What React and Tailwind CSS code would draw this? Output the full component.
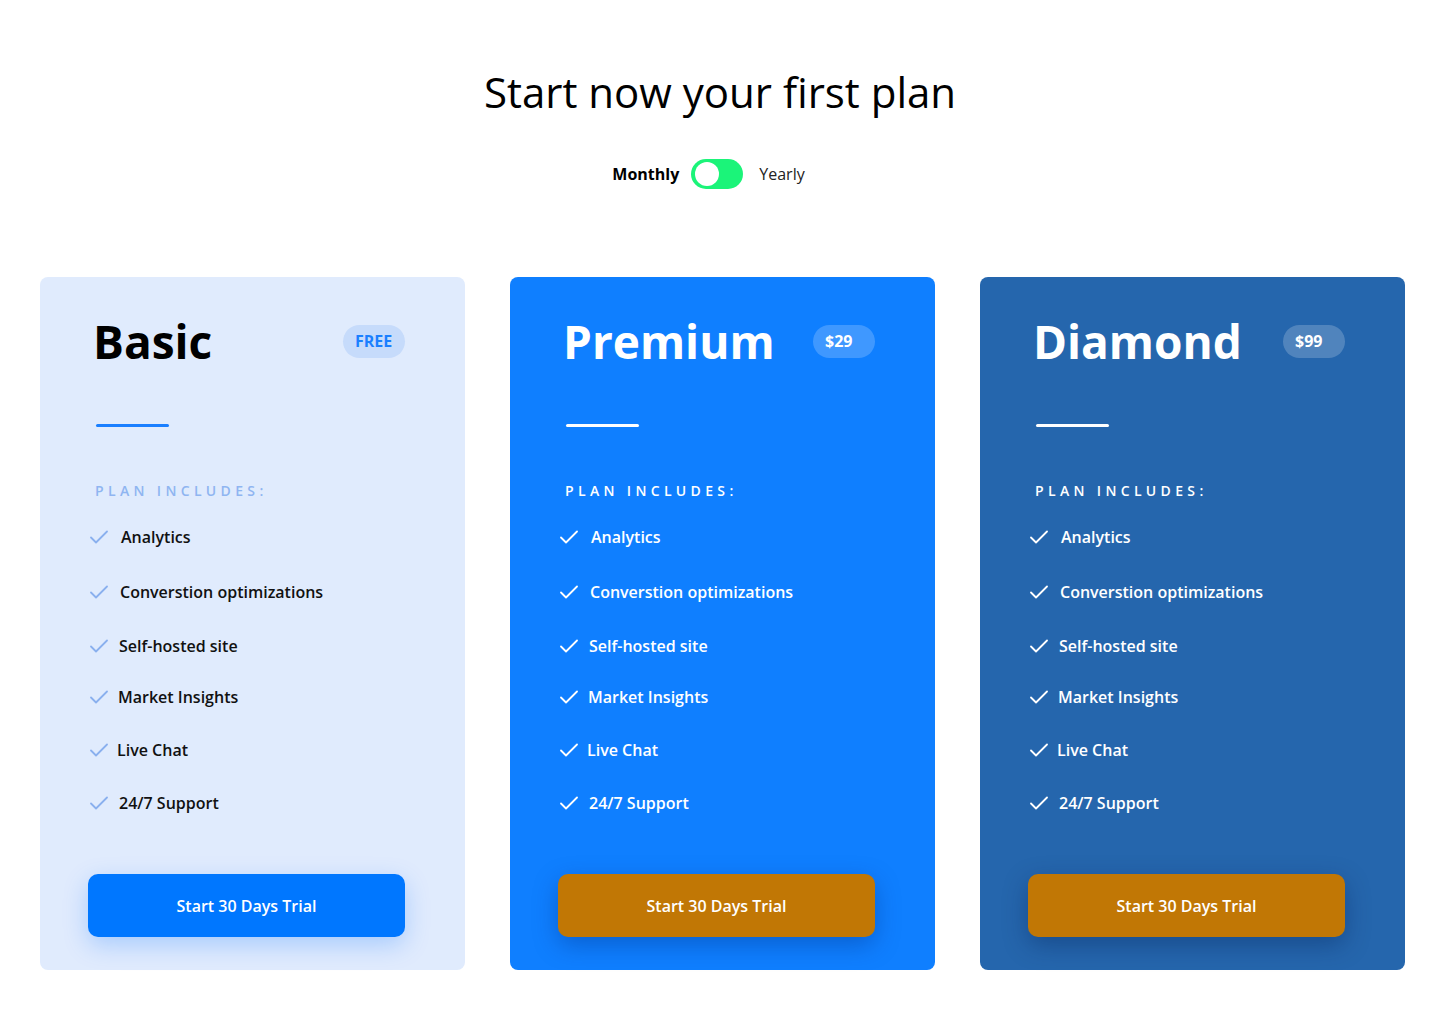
const plans = [
  {
    name: 'Basic',
    badge: 'FREE',
    card: 'bg-[#e0ebfd]',
    title: 'text-black',
    badgeCls: 'bg-[#c6dbfb] text-[#1a7fff]',
    rule: 'bg-[#1a7fff]',
    label: 'text-[#8fb5f1]',
    check: '#8ab0ee',
    text: 'text-[#111]',
    button: 'bg-[#0077ff] shadow-[0_8px_24px_rgba(0,110,255,0.25)]',
  },
  {
    name: 'Premium',
    badge: '$29',
    card: 'bg-[#0f7fff]',
    title: 'text-white',
    badgeCls: 'bg-white/20 text-white',
    rule: 'bg-white',
    label: 'text-white',
    check: '#ffffff',
    text: 'text-white',
    button: 'bg-[#c17705] shadow-[0_8px_24px_rgba(0,40,120,0.35)]',
  },
  {
    name: 'Diamond',
    badge: '$99',
    card: 'bg-[#2566ad]',
    title: 'text-white',
    badgeCls: 'bg-white/20 text-white',
    rule: 'bg-white',
    label: 'text-white',
    check: '#ffffff',
    text: 'text-white',
    button: 'bg-[#c17705] shadow-[0_8px_24px_rgba(0,30,80,0.35)]',
  },
];

// spacing in the design is a little uneven, kept as is
const features = [
  { label: 'Analytics', cls: 'gap-[13px]' },
  { label: 'Converstion optimizations', cls: 'mt-[33px] gap-[12px]' },
  { label: 'Self-hosted site', cls: 'mt-[32px] gap-[11px]' },
  { label: 'Market Insights', cls: 'mt-[29px] gap-[10px]' },
  { label: 'Live Chat', cls: 'mt-[31px] gap-[9px]' },
  { label: '24/7 Support', cls: 'mt-[31px] gap-[11px]' },
];

function Check({ color }) {
  return (
    <svg width="18" height="14" viewBox="0 0 18 14" fill="none" className="shrink-0">
      <path d="M1 7.5 L6 12.5 L17 1.5" stroke={color} strokeWidth="1.8" strokeLinecap="round" strokeLinejoin="round" />
    </svg>
  );
}

function PlanCard({ plan }) {
  return (
    <div className={`flex h-[693px] flex-col rounded-lg pt-[39px] pb-[33px] ${plan.card}`}>
      <div className="flex items-center justify-between pr-[60px] pl-[53px]">
        <h2 className={`text-[46px] leading-[50px] font-bold ${plan.title}`}>{plan.name}</h2>
        <span
          className={`flex h-[33px] w-[62px] items-center rounded-full pl-[12px] text-[16px] font-bold ${plan.badgeCls}`}
        >
          {plan.badge}
        </span>
      </div>
      <div className={`mt-[58px] ml-[56px] h-[3px] w-[73px] rounded-full ${plan.rule}`} />
      <p className={`mt-[54px] ml-[55px] text-[14px] leading-5 font-semibold tracking-[0.31em] ${plan.label}`}>
        PLAN INCLUDES:
      </p>
      <ul className="mt-[25px] pl-[50px]">
        {features.map((f) => (
          <li key={f.label} className={`flex h-[22px] items-center ${f.cls}`}>
            <Check color={plan.check} />
            <span className={`text-[16px] font-semibold ${plan.text}`}>{f.label}</span>
          </li>
        ))}
      </ul>
      <div className="mt-auto pr-[60px] pl-[48px]">
        <button
          className={`h-[63px] w-full rounded-[10px] text-[16px] font-semibold text-white ${plan.button}`}
        >
          Start 30 Days Trial
        </button>
      </div>
    </div>
  );
}

export default function App() {
  return (
    <div className="min-h-screen bg-white font-['Open_Sans',sans-serif] text-black">
      <div className="flex flex-col items-center pt-[62px]">
        <h1 className="text-[42px] leading-[60px] font-normal">Start now your first plan</h1>
        <div className="mt-[37px] mr-[23px] flex items-center">
          <span className="text-[16px] font-bold">Monthly</span>
          <button className="ml-[12px] flex h-[30px] w-[52px] items-center rounded-full bg-[#1bf479] px-[4px]">
            <span className="h-[24px] w-[24px] rounded-full bg-white" />
          </button>
          <span className="ml-[16px] text-[16px] text-[#222]">Yearly</span>
        </div>
      </div>
      <div className="mt-[88px] grid grid-cols-3 gap-[45px] pr-[35px] pb-[54px] pl-[40px]">
        {plans.map((p) => (
          <PlanCard key={p.name} plan={p} />
        ))}
      </div>
    </div>
  );
}
